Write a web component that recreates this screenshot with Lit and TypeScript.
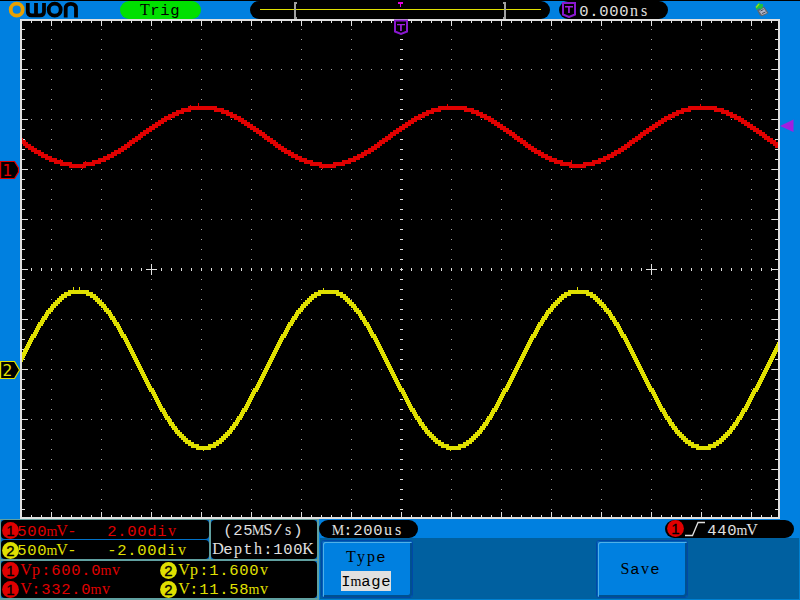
import { LitElement, html, svg, css } from "lit";
import { customElement, property } from "lit/decorators.js";

const PITCH = 10;
const SLAB = new Set([..."VvMmTypDKnuhSsw"]);

/** One line of fixed-pitch readout text, each glyph centred in its cell. */
@customElement("lcd-text")
class LcdText extends LitElement {
  @property() text = "";
  static styles = css`
    :host { display: block; height: 16px; flex: none; }
    svg { display: block; overflow: visible; }
    text { font-family: "Liberation Mono", monospace; font-size: 15.5px; text-anchor: middle; fill: currentColor; white-space: pre; }
    .slab { font-family: "Liberation Serif", serif; font-size: 16px; }
    .wide { font-family: "Liberation Serif", serif; font-size: 14px; }
  `;
  private glyph(c: string) {
    if (c === "m" || c === "M") return svg`<tspan class="wide">${c}</tspan>`;
    return SLAB.has(c) ? svg`<tspan class="slab">${c}</tspan>` : svg`<tspan>${c}</tspan>`;
  }
  render() {
    const chars = [...this.text];
    const xs = chars.map((_, i) => i * PITCH + 5).join(" ");
    return html`<svg width=${chars.length * PITCH} height="16"><text x=${xs} y="13">${chars.map((c) => this.glyph(c))}</text></svg>`;
  }
}

/** Round channel badge. */
@customElement("ch-badge")
class ChBadge extends LitElement {
  @property() n = "1";
  static styles = css`
    :host { display: block; flex: none; width: 17px; height: 17px; }
    svg { display: block; }
    .c1 { fill: #e00000; }
    .c2 { fill: #e0e000; }
    text { font: 15px "Liberation Sans", sans-serif; text-anchor: middle; fill: #000; stroke: #000; stroke-width: 0.3; }
  `;
  render() {
    return html`<svg width="17" height="17"><circle class="c${this.n}" cx="8.5" cy="8.5" r="8.4"/><text x="8.5" y="14">${this.n}</text></svg>`;
  }
}

@customElement("scope-graph")
class ScopeGraph extends LitElement {
  static styles = css`
    :host { display: block; width: 800px; height: 500px; }
    svg { display: block; }
    .bg { fill: #0080e0; }
    .screen { fill: #000; }
    .frame, .tick { fill: #e0e0e0; }
    .dots { fill: #a0a0a0; }
    .red { fill: #e00000; }
    .yellow { fill: #e0e000; }
    .flag { fill: #000; stroke-width: 1.2; }
    .f1 { stroke: #e00000; }
    .f2 { stroke: #e0e000; }
    .num { font: 15.5px "DejaVu Sans", sans-serif; text-anchor: middle; }
    .trig { fill: #a020e0; }
    .shield { fill: #000; stroke: #8a18d0; stroke-width: 2; }
  `;

  private grid() {
    let dots = "", ticks = "";
    const r = (x: number, y: number, w: number, h: number) => `M${x} ${y}h${w}v${h}h${-w}z`;
    for (let x = 31; x < 778; x += 10) {
      const major = (x - 1) % 50 === 0;
      const len = major ? 5 : 2;
      ticks += r(x, 21, 1, len) + r(x, 517 - len, 1, len) + r(x, 268, 1, 3);
      for (let y = 69; y < 517; y += 50) dots += r(x, y, 1, 1);
    }
    for (let y = 29; y < 517; y += 10) {
      const major = (y - 19) % 50 === 0;
      const len = major ? 6 : 3;
      ticks += r(22, y, len, 1) + r(778 - len, y, len, 1) + r(400, y, 3, 1);
      for (let x = 51; x < 778; x += 50) dots += r(x, y, 1, 1);
    }
    for (const x of [151, 651]) ticks += r(x - 5, 269, 11, 1) + r(x, 264, 1, 11);
    return { dots, ticks };
  }

  private wave(mid: number, amp: number, peak: number, spikes: number[][]) {
    const f = (x: number) => Math.round((mid - amp * Math.cos((2 * Math.PI * (x - peak)) / 250)) / 2) * 2;
    let d = "";
    for (let x = 22; x < 778; x++) {
      const ys = [f(x - 1), f(x), f(x + 1), f(x + 2)];
      const a = Math.min(...ys) - 2, b = Math.max(...ys) + 2;
      d += `M${x} ${a}h1v${b - a}h-1z`;
    }
    for (const [x, y] of spikes) d += `M${x} ${y}h1v3h-1z`;
    return d;
  }

  render() {
    const g = this.grid();
    return html`<svg width="800" height="500" viewBox="0 19 800 500" shape-rendering="crispEdges">
      <rect class="bg" y="19" width="800" height="500"/>
      <rect class="frame" x="20" y="19" width="760" height="500"/>
      <rect class="screen" x="22" y="21" width="756" height="496"/>
      <path class="dots" d=${g.dots}/>
      <path class="tick" d=${g.ticks}/>
      <path class="red" d=${this.wave(136.4, 29, 202.5, [[198, 103], [190, 105], [60, 159], [85, 161], [82, 166], [447, 104], [322, 166], [700, 104], [571, 160]])}/>
      <path class="yellow" d=${this.wave(369.5, 78.5, 78.5, [[73, 287], [79, 287], [323, 288], [577, 287], [203, 448], [450, 448]])}/>
      <g shape-rendering="auto">
        <path class="flag f1" d="M.6 161.5H14.5L18.5 168V172L14.5 178.5H.6z"/>
        <text class="num red" x="7.5" y="176">1</text>
        <path class="flag f2" d="M.6 361.5H14.5L19.5 370L14.5 378.5H.6z"/>
        <text class="num yellow" x="7.5" y="375.5">2</text>
        <path class="trig" d="M780 126L793.5 119.5V132z"/>
        <path class="shield" d="M395 20.5H407V31.5L401 34L395 31.5z"/>
        <path class="trig" d="M397 24h8v1.3h-3.2V31h-1.7v-5.700h-3.100z"/>
      </g>
    </svg>`;
  }
}

@customElement("app-root")
class AppRoot extends LitElement {
  static styles = css`
    :host { display: block; width: 800px; height: 600px; overflow: hidden; background: #0080e0; color: #e0e0e0; }
    * { box-sizing: border-box; }
    svg { display: block; }
    header { height: 19px; border-top: 1px solid #000; display: flex; align-items: flex-start; }
    .logo { width: 120px; height: 18px; }
    .logo path, .logo circle { fill: none; stroke: #000; stroke-width: 3.800; }
    .logo .o { stroke: #e8a000; }
    .pill { height: 18px; border-radius: 9px; background: #000; display: flex; flex: none; }
    .status { width: 81px; background: #00e000; color: #000; padding: 1px 0 0 20px; }
    .memory { width: 300px; margin-left: 49px; }
    .time { width: 109px; margin-left: 9px; padding: 2px 0 0 3px; }
    .time .sh { margin: -1px 3px 0 0; }
    .usb { margin-left: 86px; }
    footer { height: 81px; display: flex; }
    .left { width: 319px; background: #60a0a0; padding: 1px 2px 2px 1px; display: grid; grid-template-columns: 208px 106px; grid-template-rows: 39px 37px; gap: 2px; }
    .cell { background: #0070c8; }
    .channels { display: grid; grid-template-rows: 19px 19px; gap: 1px; }
    .box { background: #000; border-radius: 4px; }
    .row { display: flex; height: 19px; padding-left: 1px; }
    .row ch-badge { margin-top: 2px; }
    .channels lcd-text { margin: 3px 0 0 -2px; }
    .channels .ch2 lcd-text { margin-top: 2px; }
    .ch1 { color: #e00000; }
    .ch2 { color: #e0e000; }
    .sample { height: 39px; padding: 2px 0 0 2px; }
    .sample lcd-text:first-child { margin: 0 0 3px 10px; }
    .meas { grid-column: 1 / 3; }
    .meas .box { height: 37px; display: grid; grid-template-columns: 158px 1fr; grid-template-rows: 19px 17px; padding-top: 1px; }
    .meas .row ch-badge { margin-top: 0; }
    .meas lcd-text { margin: 0 0 0 2px; }
    .right { width: 481px; display: flex; flex-direction: column; }
    .info { height: 19px; padding-top: 1px; display: flex; }
    .base { width: 99px; padding: 2px 0 0 14px; }
    .level { width: 129px; margin-left: 247px; padding: 2px 0 0 2px; }
    .level ch-badge { margin-top: -2px; }
    .level .edge { margin: -1px 2px 0 1px; }
    .menu { height: 62px; margin-left: 1px; background: #0060a0; border-bottom: 1px solid #0080d0; border-right: 1px solid #0080d0; padding: 2px 0 0 1px; display: flex; gap: 183px; }
    .btn { width: 92px; height: 58px; border: 1px solid #0048a8; border-radius: 3px; background: #0080e0; color: #000; display: flex; flex-direction: column; align-items: center;
      box-shadow: inset 1px 1px 0 #0060b8, inset 2px 2px 0 #50b0e8, inset -2px -2px 0 #005090; }
    .type { padding-top: 8px; padding-right: 2px; }
    .save { padding-top: 20px; padding-right: 4px; }
    .value { background: #e0e0e0; margin-top: 6px; height: 20px; width: 50px; padding-top: 2px; }
  `;

  render() {
    return html`
      <header>
        <svg class="logo" viewBox="0 1 120 18">
          <circle class="o" cx="16.700" cy="9.700" r="6"/>
          <path d="M27.800 3V11.500Q27.800 15.400 31.800 15.400H40Q44 15.400 44 11.500V3M36 3V15"/>
          <circle cx="54.700" cy="9.700" r="6"/>
          <path d="M65.700 17.500V8.500Q65.700 3.900 70.800 3.900Q76 3.900 76 8.500V17.500"/>
        </svg>
        <div class="pill status"><lcd-text text="Trig"></lcd-text></div>
        <div class="pill memory">
          <svg width="300" height="18" shape-rendering="crispEdges">
            <path fill="#e0e000" d="M10 8h281v1H10z"/>
            <path fill="#a0a0a0" d="M44 1h3v2h-1v13h1v2h-3zM256 1h-3v2h1v13h-1v2h3z"/>
            <path fill="#e000e0" d="M148 1h5v2h-2v3h-1v-3h-2z"/>
          </svg>
        </div>
        <div class="pill time">
          <svg class="sh" width="14" height="16"><path d="M1 1H13V12.500L7 15L1 12.500z" fill="#000" stroke="#8a18d0" stroke-width="2"/><path d="M3 4h8v1.400h-3.200V11h-1.700v-5.600h-3.100z" fill="#a020e0"/></svg>
          <lcd-text text="0.000ns"></lcd-text>
        </div>
        <svg class="usb" width="16" height="17">
          <path d="M3 9L10 5.500L14.500 12L8 15.500L5.500 14z" fill="#606870"/>
          <path d="M5 10L9.500 7L13 12L8 14z" fill="#b0b4c8"/>
          <path d="M6.500 10l3-1.500M8 12.500l3.500-1.500" stroke="#404858"/>
          <path d="M1.500 6L5.500 1L6 3H9V5.500L7 8.500L5.500 7L2.500 9z" fill="#20c040"/>
          <path d="M2 6.500L5 3" stroke="#90e020" stroke-width="1.500"/>
        </svg>
      </header>
      <scope-graph></scope-graph>
      <footer>
        <div class="left">
          <div class="cell channels">
            <div class="box row ch1"><ch-badge n="1"></ch-badge><lcd-text text="500mV-   2.00div"></lcd-text></div>
            <div class="box row ch2"><ch-badge n="2"></ch-badge><lcd-text text="500mV-   -2.00div"></lcd-text></div>
          </div>
          <div class="cell"><div class="box sample"><lcd-text text="(25MS/s)"></lcd-text><lcd-text text="Depth:100K"></lcd-text></div></div>
          <div class="cell meas"><div class="box">
            <div class="row ch1"><ch-badge n="1"></ch-badge><lcd-text text="Vp:600.0mv"></lcd-text></div>
            <div class="row ch2"><ch-badge n="2"></ch-badge><lcd-text text="Vp:1.600v"></lcd-text></div>
            <div class="row ch1"><ch-badge n="1"></ch-badge><lcd-text text="V:332.0mv"></lcd-text></div>
            <div class="row ch2"><ch-badge n="2"></ch-badge><lcd-text text="V:11.58mv"></lcd-text></div>
          </div></div>
        </div>
        <div class="right">
          <div class="info">
            <div class="pill base"><lcd-text text="M:200us"></lcd-text></div>
            <div class="pill level">
              <ch-badge n="1"></ch-badge>
              <svg class="edge" width="20" height="16"><path d="M0 14.500H7.500L13 1.500H20" fill="none" stroke="#e0e0e0" stroke-width="1.300"/></svg>
              <lcd-text text="440mV"></lcd-text>
            </div>
          </div>
          <div class="menu">
            <div class="btn type"><lcd-text text="Type"></lcd-text><div class="value"><lcd-text text="Image"></lcd-text></div></div>
            <div class="btn save"><lcd-text text="Save"></lcd-text></div>
          </div>
        </div>
      </footer>`;
  }
}
